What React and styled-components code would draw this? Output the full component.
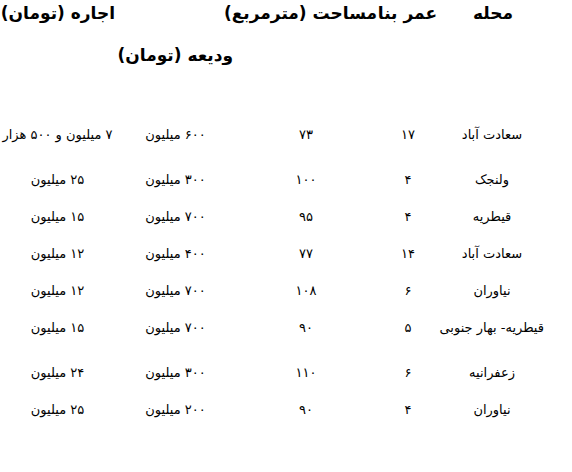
import React from 'react';
import styled, { createGlobalStyle } from 'styled-components';

const GlobalStyle = createGlobalStyle`
	html, body {
		margin: 0;
		padding: 0;
		background: #fff;
	}
	body {
		font-family: 'DejaVu Sans', 'Noto Sans', sans-serif;
		color: #000;
		overflow: hidden;
	}
`;

const Page = styled.div`
	direction: rtl;
	width: 572px;
	height: 472px;
	overflow: hidden;
`;

const Head = styled.div`
	display: flex;
	align-items: flex-start;
	height: 116px;
	padding-right: 59px;
	font-weight: bold;
	font-size: 17px;
	line-height: 26px;
	white-space: nowrap;
`;

const HeadCell = styled.div`
	width: ${({ w }) => w}px;
	margin-top: ${({ down }) => (down ? 42 : 0)}px;
	flex-shrink: 0;
`;

const Row = styled.div`
	display: grid;
	grid-template-columns: 104px 64px 140px 121px 115px;
	padding-right: 28px;
	height: ${({ tall }) => (tall ? 45 : 37)}px;
	line-height: 37px;
	font-size: 13px;
	white-space: nowrap;
`;

const Cell = styled.div`
	text-align: center;
`;

const rows = [
	['سعادت آباد', '۱۷', '۷۳', '۶۰۰ میلیون', '۷ میلیون و ۵۰۰ هزار', true],
	['ولنجک', '۴', '۱۰۰', '۳۰۰ میلیون', '۲۵ میلیون'],
	['قیطریه', '۴', '۹۵', '۷۰۰ میلیون', '۱۵ میلیون'],
	['سعادت آباد', '۱۴', '۷۷', '۴۰۰ میلیون', '۱۲ میلیون'],
	['نیاوران', '۶', '۱۰۸', '۷۰۰ میلیون', '۱۲ میلیون'],
	['قیطریه- بهار جنوبی', '۵', '۹۰', '۷۰۰ میلیون', '۱۵ میلیون', true],
	['زعفرانیه', '۶', '۱۱۰', '۳۰۰ میلیون', '۲۴ میلیون'],
	['نیاوران', '۴', '۹۰', '۲۰۰ میلیون', '۲۵ میلیون'],
];

export default function App() {
	return (
		<Page>
			<GlobalStyle />
			<Head>
				<HeadCell w={76}>محله</HeadCell>
				<HeadCell w={60}>عمر بنا</HeadCell>
				<HeadCell w={144}>مساحت (مترمربع)</HeadCell>
				<HeadCell w={118} down>
					ودیعه (تومان)
				</HeadCell>
				<HeadCell w={115}>اجاره (تومان)</HeadCell>
			</Head>
			{rows.map(([area, age, size, deposit, rent, tall], i) => (
				<Row key={i} tall={tall}>
					<Cell>{area}</Cell>
					<Cell>{age}</Cell>
					<Cell>{size}</Cell>
					<Cell>{deposit}</Cell>
					<Cell>{rent}</Cell>
				</Row>
			))}
		</Page>
	);
}
